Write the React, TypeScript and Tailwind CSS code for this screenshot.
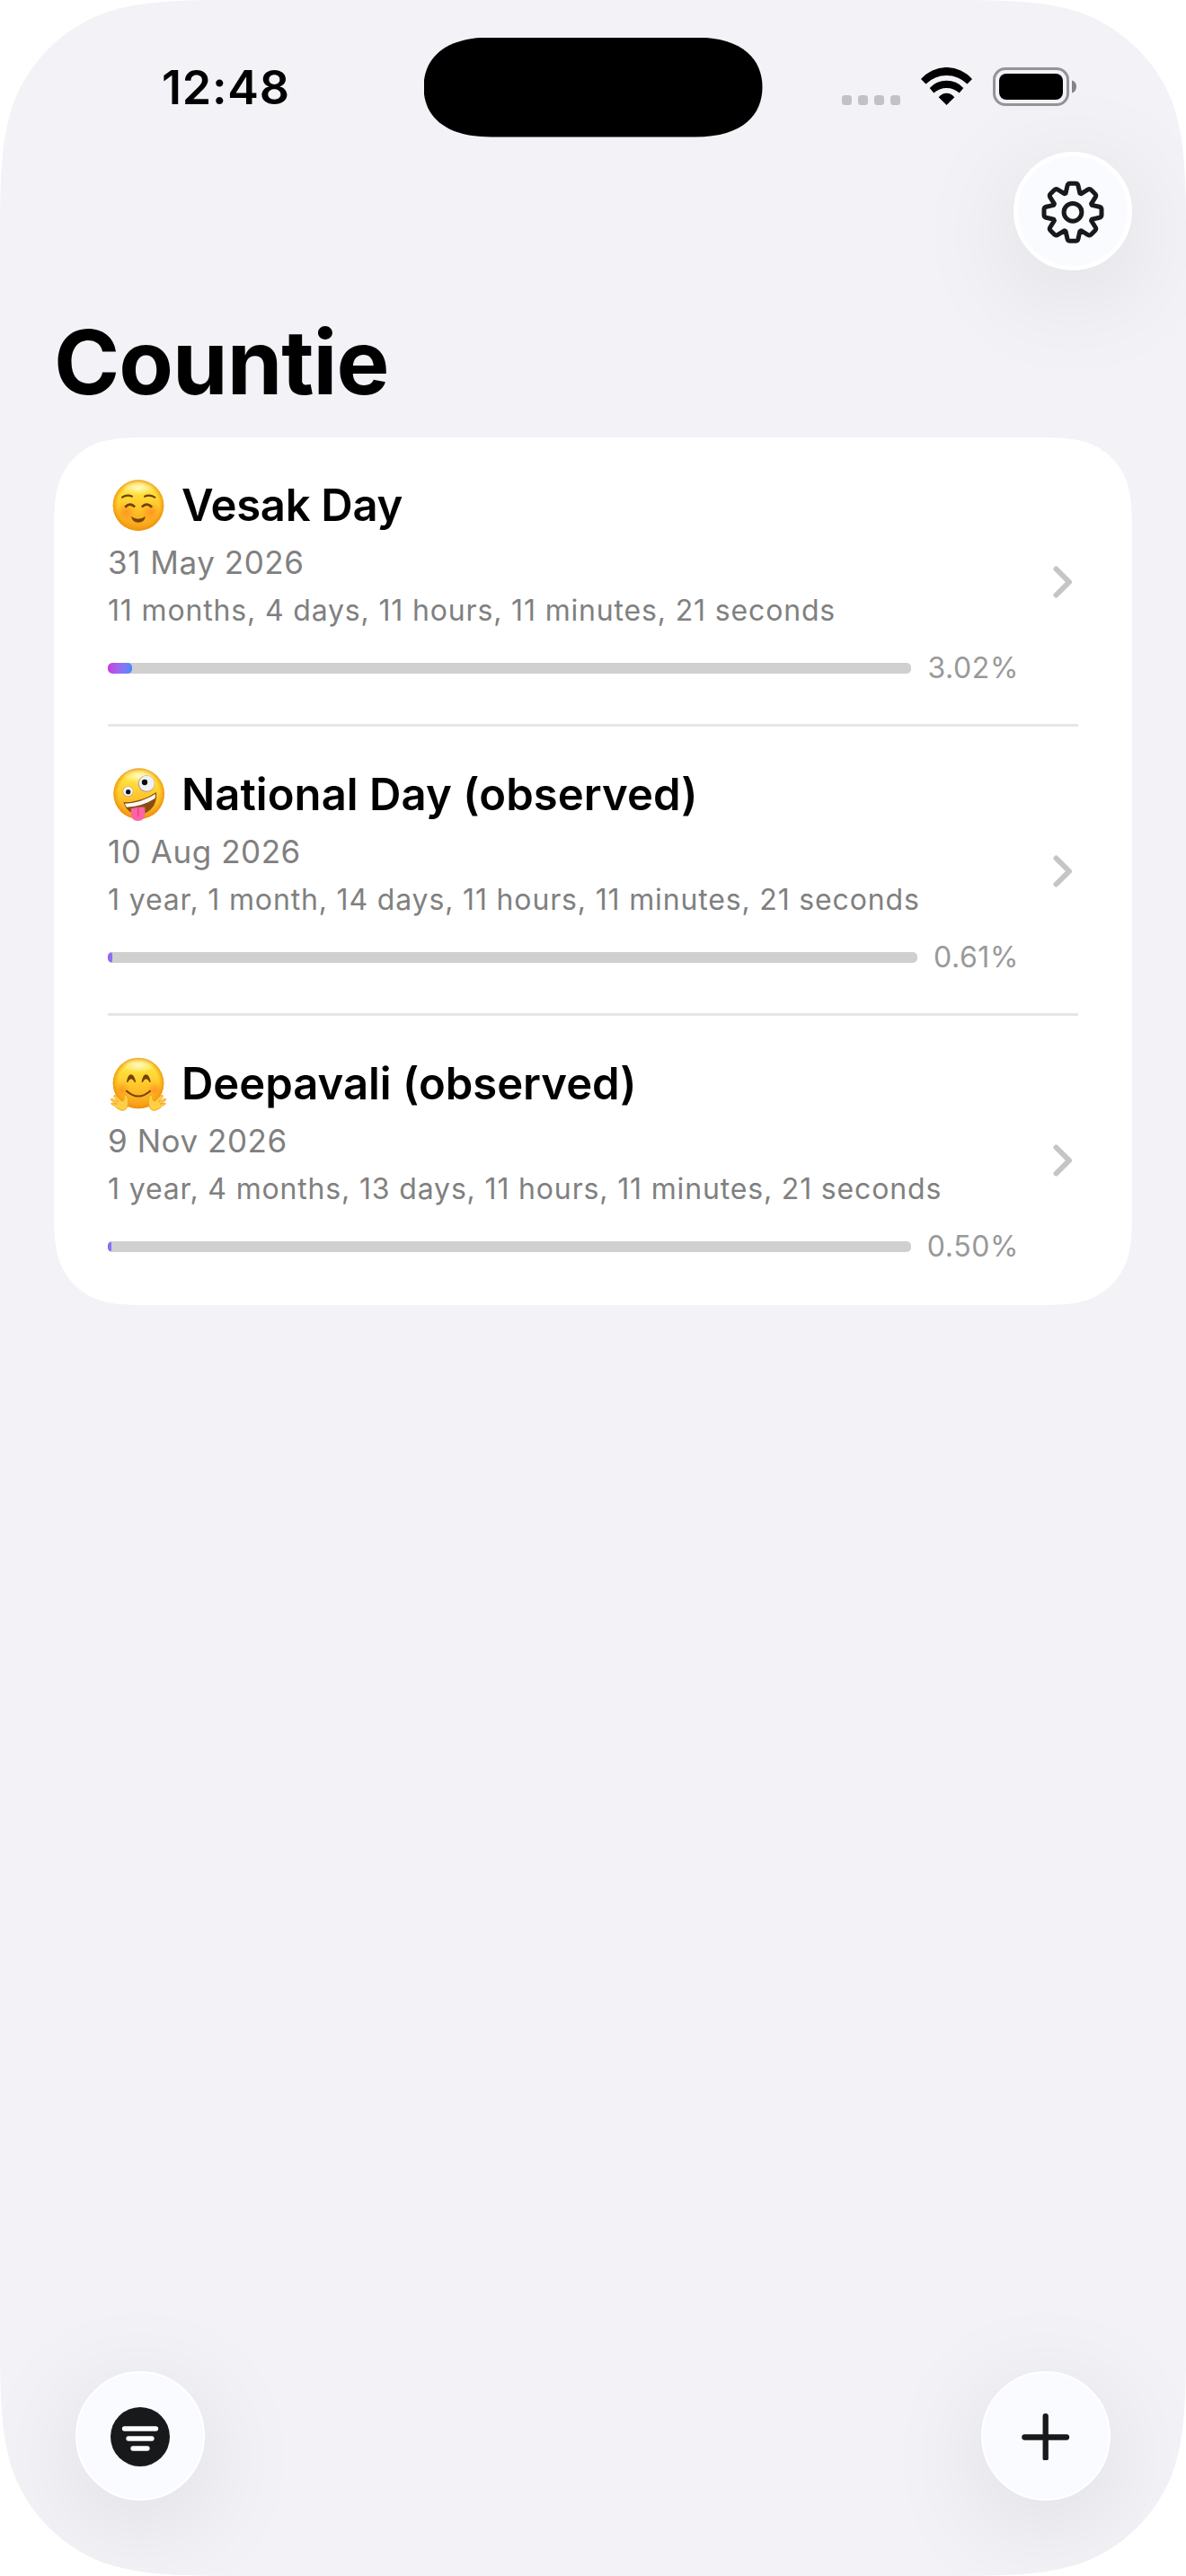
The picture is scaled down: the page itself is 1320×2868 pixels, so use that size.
import type { ReactNode } from "react";

/** Outline of a rectangle with continuous-curvature corners, as used by iOS. */
function continuousRect(w: number, h: number, r: number): string {
  const corner = (px: number, py: number, sx: number, sy: number, swap: boolean) => {
    const pt = (a: number, b: number) =>
      swap ? `${px + sx * b * r} ${py + sy * a * r}` : `${px + sx * a * r} ${py + sy * b * r}`;
    return (
      `L ${pt(1.528665, 0)} C ${pt(1.088493, 0)} ${pt(0.868407, 0)} ${pt(0.631494, 0.074911)} ` +
      `C ${pt(0.372824, 0.169059)} ${pt(0.16906, 0.372824)} ${pt(0.074911, 0.631494)} ` +
      `C ${pt(0, 0.868407)} ${pt(0, 1.088493)} ${pt(0, 1.528665)}`
    );
  };
  return (
    `M ${w / 2} 0 ` +
    [
      corner(w, 0, -1, 1, false),
      corner(w, h, -1, -1, true),
      corner(0, h, 1, -1, false),
      corner(0, 0, 1, 1, true),
    ].join(" ") +
    " Z"
  );
}

function gearPath(): string {
  let d = "";
  for (let i = 0; i < 8; i++) {
    const a = (i * Math.PI) / 4;
    const p = (x: number, y: number) =>
      `${(x * Math.cos(a) - y * Math.sin(a)).toFixed(2)} ${(x * Math.sin(a) + y * Math.cos(a)).toFixed(2)}`;
    d +=
      `${i ? "L" : "M"}${p(-7.9, -21.2)} L${p(-6, -29.6)} Q${p(-5.4, -32)} ${p(-3, -32)} ` +
      `L${p(3, -32)} Q${p(5.4, -32)} ${p(6, -29.6)} L${p(7.9, -21.2)} `;
  }
  return d + "Z";
}

function FaceGradients({ id }: { id: string }) {
  return (
    <defs>
      <linearGradient id={`${id}-base`} x1="0" y1="0" x2="0" y2="1">
        <stop offset="0" stopColor="#fff394" />
        <stop offset="0.22" stopColor="#ffe23c" />
        <stop offset="0.6" stopColor="#ffc228" />
        <stop offset="1" stopColor="#f59c18" />
      </linearGradient>
      <radialGradient id={`${id}-rim`} cx="0.5" cy="0.5" r="0.5">
        <stop offset="0.8" stopColor="#f09a10" stopOpacity="0" />
        <stop offset="1" stopColor="#ea8c08" stopOpacity="0.8" />
      </radialGradient>
      <radialGradient id={`${id}-blush`}>
        <stop offset="0" stopColor="#ff7a1c" stopOpacity="0.6" />
        <stop offset="1" stopColor="#ff8a1c" stopOpacity="0" />
      </radialGradient>
      <radialGradient id={`${id}-shine`}>
        <stop offset="0" stopColor="#fffde0" stopOpacity="0.85" />
        <stop offset="1" stopColor="#fff9a0" stopOpacity="0" />
      </radialGradient>
    </defs>
  );
}

function Face({ id, cx, cy }: { id: string; cx: number; cy: number }) {
  return (
    <>
      <circle cx={cx} cy={cy} r="85" fill={`url(#${id}-base)`} />
      <circle cx={cx} cy={cy} r="85" fill={`url(#${id}-rim)`} />
      <ellipse cx={cx} cy={cy - 58} rx="56" ry="24" fill={`url(#${id}-shine)`} />
    </>
  );
}

function SmilingFace() {
  return (
    <svg className="h-[60px] w-[82px] shrink-0 overflow-visible" viewBox="60 69 246 180">
      <FaceGradients id="smile" />
      <Face id="smile" cx={162} cy={158} />
      <circle cx="121" cy="180" r="34" fill="url(#smile-blush)" />
      <circle cx="204" cy="180" r="34" fill="url(#smile-blush)" />
      <g fill="none" stroke="#70400c" strokeLinecap="round">
        <path d="M108 131 Q124 121 141 128 M183 128 Q200 121 217 131" strokeWidth="6.500" />
        <path d="M120 162 Q133 148 148 161 M176 161 Q191 148 205 162" strokeWidth="8" />
      </g>
      <path d="M138 195 Q161 211 186 195 Q182 215 162 215.500 Q142 215 138 195Z" fill="#7a430c" />
    </svg>
  );
}

function ZanyFace() {
  return (
    <svg className="h-[60px] w-[82px] shrink-0 overflow-visible" viewBox="60 75 246 180">
      <FaceGradients id="zany" />
      <Face id="zany" cx={164} cy={161} />
      <circle cx="127" cy="154" r="18" fill="#c9a184" />
      <circle cx="127.500" cy="153" r="16" fill="#f4f4f6" />
      <circle cx="128" cy="155" r="8" fill="#101010" />
      <circle cx="189" cy="128" r="28" fill="#b9a49c" />
      <circle cx="190" cy="127" r="25.500" fill="#f1f1f5" />
      <circle cx="183" cy="123" r="9.500" fill="#0c0c0c" />
      <path d="M112 190 Q172 190 222 156 Q226 190 204 213 Q183 232 158 231 Q124 226 112 190Z" fill="#8a4d0c" />
      <path d="M117 194 Q172 192 219 162 Q220 170 217 177 Q178 203 123 206 Q119 201 117 194Z" fill="#fafafa" />
      <path d="M137 211 Q160 204 184 206 V229 Q183 252 160 252 Q139 251 138 230Z" fill="#ff62a5" />
      <path d="M161 210 V234" stroke="#e23f88" strokeWidth="4" strokeLinecap="round" />
    </svg>
  );
}

const HAND =
  "M101 257 Q90 253 82 243 L73 239 Q68 235 75 234 L90 238 L72 226 Q67 219 75 220 L95 231 L80 213 Q79 205 88 210 L106 227 Q112 231 114 222 L115 211 Q119 203 125 210 Q128 222 128 234 Q127 252 116 258 Q107 260 101 257Z";

function HuggingFace() {
  return (
    <svg className="h-[60px] w-[82px] shrink-0 overflow-visible" viewBox="60 81 246 180">
      <FaceGradients id="hug" />
      <Face id="hug" cx={162} cy={168} />
      <circle cx="107" cy="190" r="28" fill="url(#hug-blush)" />
      <circle cx="217" cy="190" r="28" fill="url(#hug-blush)" />
      <g fill="none" stroke="#74410a" strokeLinecap="round" strokeLinejoin="round">
        <path d="M125 163 Q129 141 137.500 141 Q146 141 151 163 Q144 152 138 152 Q131 152 125 163Z" fill="#74410a" strokeWidth="4" />
        <path d="M175 163 Q179 141 187.500 141 Q196 141 201 163 Q194 152 188 152 Q181 152 175 163Z" fill="#74410a" strokeWidth="4" />
        <path d="M123 194 Q162 229 201 194" strokeWidth="6" />
      </g>
      <g fill="#ffcf45" stroke="#ee9d1c" strokeWidth="2.500">
        <path d={HAND} />
        <path d={HAND} transform="translate(324 0) scale(-1 1)" />
      </g>
    </svg>
  );
}

interface Countdown {
  icon: ReactNode;
  title: string;
  titleClass: string;
  date: string;
  remaining: string;
  percent: string;
  progress: number;
}

const countdowns: Countdown[] = [
  {
    icon: <SmilingFace />,
    title: "Vesak Day",
    titleClass: "tracking-[-0.3px]",
    date: "31 May 2026",
    remaining: "11 months, 4 days, 11 hours, 11 minutes, 21 seconds",
    percent: "3.02%",
    progress: 3.02,
  },
  {
    icon: <ZanyFace />,
    title: "National Day (observed)",
    titleClass: "tracking-[0.06px]",
    date: "10 Aug 2026",
    remaining: "1 year, 1 month, 14 days, 11 hours, 11 minutes, 21 seconds",
    percent: "0.61%",
    progress: 0.61,
  },
  {
    icon: <HuggingFace />,
    title: "Deepavali (observed)",
    titleClass: "tracking-[-0.02px]",
    date: "9 Nov 2026",
    remaining: "1 year, 4 months, 13 days, 11 hours, 11 minutes, 21 seconds",
    percent: "0.50%",
    progress: 0.5,
  },
];

function CountdownRow({ item, last }: { item: Countdown; last: boolean }) {
  return (
    <li className={`mx-[60px] flex h-[322px] justify-between ${last ? "" : "border-b-[3px] border-[#e6e6e6]"}`}>
      <div className="w-[1014px] pt-[46px]">
        <div className="flex h-[60px] items-center">
          {item.icon}
          <h2 className={`text-[49px] leading-[60px] font-semibold whitespace-nowrap text-black ${item.titleClass}`}>
            {item.title}
          </h2>
        </div>
        <p className="mt-[11px] text-[35px] leading-[44px] tracking-[0.55px] text-[#808080]">{item.date}</p>
        <p className="mt-[11px] text-[32px] leading-[42px] tracking-[0.84px] whitespace-nowrap text-[#808080]">
          {item.remaining}
        </p>
        <div className="mt-[22px] flex h-[42px] items-center gap-[18px]">
          <div className="h-3 flex-1 overflow-hidden rounded-[5px] bg-[#d0d0d0]">
            <div
              className="h-full rounded-[5px] bg-linear-to-r from-[#c637e1] to-[#3d8bff]"
              style={{ width: `${item.progress}%` }}
            />
          </div>
          <span className="text-[32px] leading-[42px] tracking-[0.6px] text-[#999999]">{item.percent}</span>
        </div>
      </div>
      <svg className="mt-[142px] mr-[5px] h-[38px] w-[24px]" viewBox="0 0 24 38" fill="none">
        <path d="M4.500 4.500 L19 19 L4.500 33.500" stroke="#c5c5c7" strokeWidth="6" strokeLinecap="round" strokeLinejoin="round" />
      </svg>
    </li>
  );
}

function StatusBar() {
  return (
    <header className="grid h-[169px] grid-cols-[471.5px_377px_1fr]">
      <time className="pt-[66px] pl-[180px] text-[52px] leading-[64px] font-semibold tracking-[0.8px] text-black">
        12:48
      </time>
      <div
        className="mt-[41.5px] h-[111px] bg-black"
        style={{
          clipPath:
            'path("M75 0 H302 C357 0 377 26 377 55.500 C377 85 357 111 302 111 H75 C20 111 0 85 0 55.500 C0 26 20 0 75 0Z")',
        }}
      />
      <div className="flex items-start pt-[75px] pl-[88.5px]">
        <div className="mt-[31px] flex gap-[7px]">
          <span className="size-[11px] rounded-[3.5px] bg-[#c2c1c6]" />
          <span className="size-[11px] rounded-[3.5px] bg-[#c2c1c6]" />
          <span className="size-[11px] rounded-[3.5px] bg-[#c2c1c6]" />
          <span className="size-[11px] rounded-[3.5px] bg-[#c2c1c6]" />
        </div>
        <svg className="ml-[23px] h-[42px] w-[57px]" viewBox="0 0 57 42" fill="#000">
          <path d="M0 13 A37.700 37.700 0 0 1 57 13 L51.500 18.400 A33 33 0 0 0 5.500 18.400Z" />
          <path d="M9.700 23 A25.400 25.400 0 0 1 47.300 23 L42.700 28.600 A20.600 20.600 0 0 0 14.300 28.600Z" />
          <path d="M19.700 33.300 A10.700 10.700 0 0 1 37.300 33.300 L28.500 42Z" />
        </svg>
        <svg className="ml-[23px] h-[43px] w-[94px]" viewBox="0 0 94 43">
          <rect x="1.500" y="1.500" width="82" height="40" rx="12.500" fill="none" stroke="#949396" strokeWidth="3" />
          <rect x="7" y="7" width="71" height="29" rx="8" fill="#000" />
          <path d="M88 14.500 C91.500 15.500 93 18.500 93 21.500 C93 24.500 91.500 27.500 88 28.500Z" fill="#858488" />
        </svg>
      </div>
    </header>
  );
}

export default function App() {
  return (
    <div className="h-[2868px] w-[1320px] bg-white font-[Inter,sans-serif]">
      <div
        className="flex h-full w-full flex-col bg-[#f2f2f7]"
        style={{ clipPath: `path("${continuousRect(1320, 2868, 186)}")` }}
      >
        <StatusBar />
        <nav className="flex justify-end pr-[60px]">
          <button
            aria-label="Settings"
            className="flex size-[132px] items-center justify-center rounded-full border-[5px] border-white bg-[#f9fbff] shadow-[0_24px_120px_rgba(0,0,0,0.1)]"
          >
            <svg className="size-[72px] overflow-visible" viewBox="-36 -37.300 72 72" fill="none" stroke="#18191b" strokeWidth="5" strokeLinejoin="round">
              <path d={gearPath()} />
              <circle r="9.900" />
            </svg>
          </button>
        </nav>
        <h1 className="mt-[42px] pl-[60px] text-[99px] leading-[120px] font-bold tracking-[-0.97px] text-black">
          Countie
        </h1>
        <ul
          className="mx-[60px] mt-6 h-[966px] bg-white"
          style={{ clipPath: `path("${continuousRect(1200, 966, 78)}")` }}
        >
          {countdowns.map((item, i) => (
            <CountdownRow key={item.title} item={item} last={i === countdowns.length - 1} />
          ))}
        </ul>
        <footer className="mt-auto flex justify-between px-[84px] pb-[84px]">
          <button
            aria-label="Filter"
            className="flex size-36 items-center justify-center rounded-full border-2 border-white bg-[#f9fbff] shadow-[0_24px_120px_rgba(0,0,0,0.1)]"
          >
            <svg className="size-[66px] overflow-visible" viewBox="0 -1 66 66" fill="none">
              <circle cx="33" cy="33" r="33" fill="#18191b" />
              <path d="M15.500 24 H50.500 M20 35 H46 M25 46 H41" stroke="#fff" strokeWidth="5.300" strokeLinecap="round" />
            </svg>
          </button>
          <button
            aria-label="Add"
            className="flex size-36 items-center justify-center rounded-full border-2 border-white bg-[#f9fbff] shadow-[0_24px_120px_rgba(0,0,0,0.1)]"
          >
            <svg className="size-[54px]" viewBox="-26.700 -28.500 54 54" fill="none">
              <path d="M-23.300 0 H23.300 M0 -23.300 V23.300" stroke="#18191b" strokeWidth="6.300" strokeLinecap="round" />
            </svg>
          </button>
        </footer>
      </div>
    </div>
  );
}
